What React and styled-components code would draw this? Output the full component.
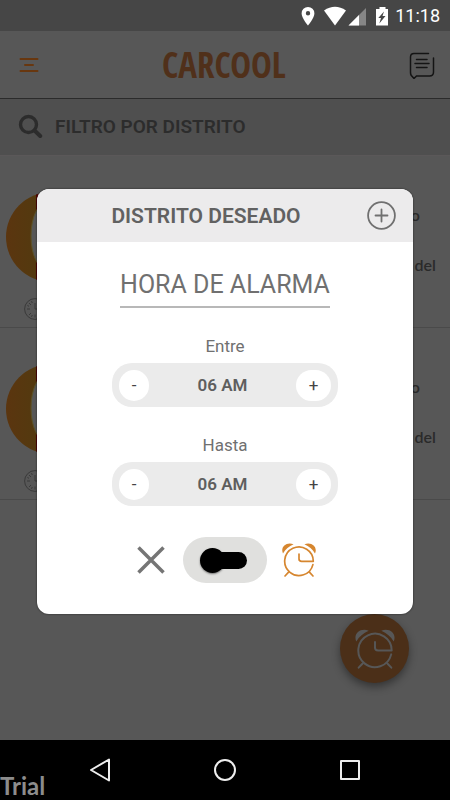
import React, { useState } from 'react';
import styled, { createGlobalStyle } from 'styled-components';

const GlobalStyle = createGlobalStyle`
    * {
        box-sizing: border-box;
    }

    body {
        margin: 0;
        background: #575757;
        font-family: Roboto, "Liberation Sans", sans-serif;
    }

    button {
        padding: 0;
        border: none;
        background: none;
        color: inherit;
        font-family: inherit;
        cursor: pointer;
    }

    svg {
        display: block;
    }
`;

const Screen = styled.div`
    position: relative;
    display: flex;
    flex-direction: column;
    min-height: 100vh;
    overflow: hidden;
`;

const StatusBar = styled.div`
    display: flex;
    align-items: center;
    justify-content: flex-end;
    height: 31px;
    padding-right: 10px;
    background: #464646;
    color: #ffffff;
    font-size: 18px;
`;

const StatusTime = styled.span`
    margin-left: 7px;
`;

const TopBar = styled.header`
    display: flex;
    align-items: center;
    justify-content: space-between;
    height: 68px;
    padding: 0 15px 0 19px;
    border-bottom: 1px solid #2b2b2b;
`;

const Logo = styled.h1`
    margin: 0;
    color: #50301a;
    font-family: "Open Sans Condensed", "Liberation Sans Narrow", Roboto, sans-serif;
    font-size: 35px;
    font-weight: 700;
    line-height: 40px;
`;

const FilterButton = styled.button`
    display: flex;
    align-items: center;
    gap: 12px;
    height: 57px;
    padding: 0 18px 2px;
    background: #4f4f4f;
    border-bottom: 1px solid #5b5859;
    color: #2c2c2c;
    font-size: 19px;
    font-weight: 600;
`;

const List = styled.ul`
    flex: 1;
    margin: 0;
    padding: 0;
    list-style: none;
`;

const Row = styled.li`
    display: flex;
    justify-content: space-between;
    height: 172px;
    padding: 36px 14px 0 6px;
    border-bottom: 1px solid #4a4a4a;
`;

const RowMedia = styled.div`
    display: flex;
    flex-direction: column;
    align-items: flex-start;
    gap: 16px;
`;

const ClockHolder = styled.div`
    padding-left: 18px;
`;

const RowText = styled.div`
    display: flex;
    flex-direction: column;
    align-items: flex-end;
    gap: 30px;
    padding-top: 13px;
    color: #2a2a2a;
    font-family: Lato, sans-serif;
    font-size: 16px;
    font-weight: 600;
    line-height: 20px;
`;

const RowTitle = styled.span`
    padding-right: 16px;
`;

const Fab = styled.button`
    position: absolute;
    right: 41px;
    bottom: 117px;
    display: flex;
    align-items: center;
    justify-content: center;
    width: 69px;
    height: 69px;
    border-radius: 50%;
    background: #4b2f18;
    color: #575757;
    box-shadow: 0 4px 8px rgba(0, 0, 0, 0.4);
`;

const NavBar = styled.nav`
    display: grid;
    grid-template-columns: 150px 1fr 150px;
    align-items: center;
    height: 60px;
    background: #000000;
`;

const NavButton = styled.button`
    display: flex;
    justify-content: ${props => props.$align};
    padding: 0 38px;
`;

const Watermark = styled.span`
    position: absolute;
    left: 0;
    bottom: 0;
    color: #8c8c8c;
    font-family: Lato, sans-serif;
    font-size: 24px;
    font-weight: 700;
    line-height: 28px;
`;

const Overlay = styled.div`
    position: absolute;
    inset: 0;
    display: flex;
    align-items: center;
    padding: 3px 37px 0;
`;

const Modal = styled.section`
    flex: 1;
    border-radius: 12px;
    overflow: hidden;
    background: #ffffff;
    box-shadow: 0 0 2px rgba(0, 0, 0, 0.7);
`;

const ModalHeader = styled.header`
    display: grid;
    grid-template-columns: 1fr 30px;
    align-items: center;
    gap: 8px;
    height: 53px;
    padding: 0 16px;
    background: #ecebec;
    color: #707070;
`;

const ModalTitle = styled.h2`
    margin: 0;
    color: #616161;
    font-size: 21px;
    font-weight: 600;
    line-height: 28px;
    text-align: center;
`;

const ModalBody = styled.div`
    display: flex;
    flex-direction: column;
    align-items: center;
    padding: 24px 0 31px;
`;

const AlarmTitle = styled.h3`
    margin: 0;
    padding-bottom: 2px;
    border-bottom: 2px solid #b8b8b8;
    color: #707070;
    font-size: 25px;
    font-weight: 400;
    line-height: 38px;
`;

const Field = styled.div`
    display: flex;
    flex-direction: column;
    align-items: center;
    gap: 5px;
    width: 226px;
    margin-top: 26px;
`;

const FieldLabel = styled.span`
    color: #707070;
    font-size: 17px;
    line-height: 24px;
`;

const Stepper = styled.div`
    display: flex;
    align-items: center;
    justify-content: space-between;
    width: 100%;
    height: 44px;
    padding: 0 7px;
    border-radius: 20px;
    background: #ebebeb;
`;

const StepButton = styled.button`
    width: ${props => props.$wide ? '35px' : '30px'};
    height: 31px;
    border-radius: 16px;
    background: #ffffff;
    color: #444444;
    font-size: 17px;
    line-height: 31px;
`;

const Hour = styled.output`
    color: #5e5e5e;
    font-size: 17px;
    font-weight: 600;
`;

const Actions = styled.div`
    display: flex;
    align-items: center;
    gap: 14px;
    margin-top: 31px;
`;

const ActionButton = styled.button`
    display: flex;
    align-items: center;
    justify-content: center;
    width: 36px;
    height: 36px;
    color: ${props => props.$color};
`;

const ToggleBox = styled.label`
    display: flex;
    align-items: center;
    justify-content: center;
    width: 84px;
    height: 46px;
    padding-right: 3px;
    border-radius: 23px;
    background: #e0e0de;
`;

const Toggle = styled.input`
    appearance: none;
    display: flex;
    align-items: center;
    justify-content: ${props => props.checked ? 'flex-end' : 'flex-start'};
    width: 47px;
    height: 17px;
    margin: 0;
    border-radius: 9px;
    background: linear-gradient(#000000, #000000) right / 40px 17px no-repeat;

    &::before {
        content: '';
        width: 25px;
        height: 25px;
        border-radius: 50%;
        background: #000000;
        box-shadow: 0 1px 2px rgba(0, 0, 0, 0.5);
    }
`;

const AlarmIcon = ({ size }) => (
    <svg width={size} height={size} viewBox="0 0 36 36" fill="none" stroke="currentColor" strokeWidth="1.7">
        <path d="M31.9 22.6A14.3 14.3 0 1 1 32.3 19.3H20.6Q18 19.3 18 17V12" strokeLinecap="round" strokeLinejoin="round" />
        <path d="M7.6 30.2L4 34M28.4 30.2L32 34" strokeLinecap="round" />
        <path d="M2 11.6C-1 5 5.400-.6 12.600 2.300C8 4.300 4.400 7.200 2 11.600ZM34 11.600C37 5 30.600-.6 23.400 2.300C28 4.300 31.600 7.200 34 11.600Z" fill="currentColor" stroke="none" />
    </svg>
);

const AvatarIcon = () => (
    <svg width="90" height="90" viewBox="0 0 90 90">
        <defs>
            <linearGradient id="ring">
                <stop offset="0" stopColor="#5b350f" />
                <stop offset="0.3" stopColor="#54390f" />
            </linearGradient>
            <clipPath id="redSide">
                <rect x="30" width="60" height="90" />
            </clipPath>
        </defs>
        <circle cx="45" cy="45" r="45" fill="url(#ring)" />
        <circle cx="45" cy="45" r="45" fill="#4d0505" clipPath="url(#redSide)" />
        <ellipse cx="41" cy="44" rx="16" ry="34" fill="#575757" stroke="#5c5226" strokeWidth="1" />
    </svg>
);

const ClockIcon = () => (
    <svg width="22" height="22" viewBox="0 0 22 22" fill="none" stroke="#3a3a3a" strokeWidth="1">
        <circle cx="11" cy="11" r="10.4" />
        <path d="M11 5V11H16M11 16.5V19.5M3 11H6M5 5L7 7M5 17L7 15M7.5 3.2L8.3 5M7.5 18.8L8.3 17M3.4 7.5L5 8.3M17 17L15 15M17 5L15 7" />
    </svg>
);

const StatusIcons = () => (
    <svg width="90" height="22" viewBox="0 0 90 22" fill="#ffffff">
        <path fillRule="evenodd" d="M10 2A6.4 6.4 0 0 0 3.6 8.4C3.6 13 10 20.5 10 20.5S16.4 13 16.4 8.4A6.4 6.4 0 0 0 10 2ZM10 6.1A2.2 2.2 0 1 1 10 10.5A2.2 2.2 0 1 1 10 6.1Z" />
        <path d="M26 5.5Q37 -2 48 5.5L37 20.5Z" />
        <path d="M68 3V20.5H50.500Z" opacity=".35" />
        <path d="M61 10V20.5H50.500Z" />
        <path fillRule="evenodd" d="M78 4H81.500V2H87.500V4H90V20.500H78ZM86 6.500L80.300 13H83L81.300 18.500L87.500 11H84.500Z" />
    </svg>
);

const MenuIcon = () => (
    <svg width="20" height="16" viewBox="0 0 20 16" stroke="#68370f" strokeWidth="2" strokeLinecap="round">
        <path d="M1.500 2H18.500M6 8H14M1.500 14H18.500" />
    </svg>
);

const ChatIcon = () => (
    <svg width="26" height="28" viewBox="0 0 26 28" fill="none" stroke="#141414" strokeWidth="1.500" strokeLinecap="round">
        <path d="M19.500 2.500H5Q1.500 2.500 1.500 6V21Q1.500 24.700 3 25.200L5 27.500L7.500 25H20.500Q24.500 25 24.500 21V7M7.500 8.500H18M6 12.500H20M7.500 16.500H18" />
    </svg>
);

const SearchIcon = () => (
    <svg width="25" height="25" viewBox="0 0 25 25" fill="none" stroke="#2c2c2c" strokeLinecap="round">
        <circle cx="10.500" cy="10.500" r="8" strokeWidth="3.400" />
        <path d="M16.800 16.800L22.200 22" strokeWidth="4" />
    </svg>
);

const PlusIcon = () => (
    <svg width="30" height="30" viewBox="0 0 30 30" fill="none" stroke="currentColor" strokeWidth="1.800">
        <circle cx="14.500" cy="14.500" r="13.400" />
        <path d="M14.500 8.500V20.500M8.500 14.500H20.500" strokeLinecap="round" />
    </svg>
);

const CloseIcon = () => (
    <svg width="28" height="28" viewBox="0 0 28 28" stroke="currentColor" strokeWidth="3.500">
        <path d="M1.500 1.500L26.500 26.500M26.500 1.500L1.500 26.500" />
    </svg>
);

const rows = [
    { id: 1, title: 'o', detail: 'del' },
    { id: 2, title: 'o', detail: 'del' },
];

const formatHour = (hour) => {
    const value = hour % 12 || 12;
    return `${String(value).padStart(2, '0')} ${hour < 12 ? 'AM' : 'PM'}`;
}

const HourField = ({ id, label }) => {
    const [hour, setHour] = useState(6);

    return (
        <Field role="group" aria-labelledby={id}>
            <FieldLabel id={id}>{label}</FieldLabel>
            <Stepper>
                <StepButton onClick={() => setHour((hour + 23) % 24)}>-</StepButton>
                <Hour>{formatHour(hour)}</Hour>
                <StepButton $wide onClick={() => setHour((hour + 1) % 24)}>+</StepButton>
            </Stepper>
        </Field>
    )
}

const App = () => {
    const [active, setActive] = useState(false);
    const [open, setOpen] = useState(true);

    return (
        <Screen>
            <GlobalStyle />
            <StatusBar>
                <StatusIcons />
                <StatusTime>11:18</StatusTime>
            </StatusBar>
            <TopBar>
                <button aria-label="Menú"><MenuIcon /></button>
                <Logo>CARCOOL</Logo>
                <button aria-label="Mensajes"><ChatIcon /></button>
            </TopBar>
            <FilterButton>
                <SearchIcon />
                FILTRO POR DISTRITO
            </FilterButton>
            <List>
                {rows.map((item) => (
                    <Row key={item.id}>
                        <RowMedia>
                            <AvatarIcon />
                            <ClockHolder><ClockIcon /></ClockHolder>
                        </RowMedia>
                        <RowText>
                            <RowTitle>{item.title}</RowTitle>
                            <span>{item.detail}</span>
                        </RowText>
                    </Row>
                ))}
            </List>
            <Fab aria-label="Alarma" onClick={() => setOpen(true)}>
                <AlarmIcon size={42} />
            </Fab>
            <NavBar>
                <NavButton $align="flex-end" aria-label="Atrás">
                    <svg width="24" height="24" viewBox="0 0 24 24" fill="none" stroke="#eeeeee" strokeWidth="2" strokeLinejoin="round">
                        <path d="M21 1.500V22.500L3 12Z" />
                    </svg>
                </NavButton>
                <NavButton $align="center" aria-label="Inicio">
                    <svg width="24" height="24" viewBox="0 0 24 24" fill="none" stroke="#eeeeee" strokeWidth="2">
                        <circle cx="12" cy="12" r="10" />
                    </svg>
                </NavButton>
                <NavButton $align="flex-start" aria-label="Recientes">
                    <svg width="24" height="24" viewBox="0 0 24 24" fill="none" stroke="#eeeeee" strokeWidth="2" strokeLinejoin="round">
                        <path d="M3 3H21V21H3Z" />
                    </svg>
                </NavButton>
            </NavBar>
            {open && (
                <Overlay>
                    <Modal role="dialog" aria-labelledby="modal-title">
                        <ModalHeader>
                            <ModalTitle id="modal-title">DISTRITO DESEADO</ModalTitle>
                            <button aria-label="Agregar"><PlusIcon /></button>
                        </ModalHeader>
                        <ModalBody>
                            <AlarmTitle>HORA DE ALARMA</AlarmTitle>
                            <HourField id="from" label="Entre" />
                            <HourField id="to" label="Hasta" />
                            <Actions>
                                <ActionButton $color="#757575" aria-label="Cerrar" onClick={() => setOpen(false)}>
                                    <CloseIcon />
                                </ActionButton>
                                <ToggleBox>
                                    <Toggle
                                        type="checkbox"
                                        aria-label="Activar alarma"
                                        checked={active}
                                        onChange={() => setActive(!active)}
                                    />
                                </ToggleBox>
                                <ActionButton $color="#d6862f" aria-label="Guardar alarma">
                                    <AlarmIcon size={36} />
                                </ActionButton>
                            </Actions>
                        </ModalBody>
                    </Modal>
                </Overlay>
            )}
            <Watermark>Trial</Watermark>
        </Screen>
    )
}

export default App;
